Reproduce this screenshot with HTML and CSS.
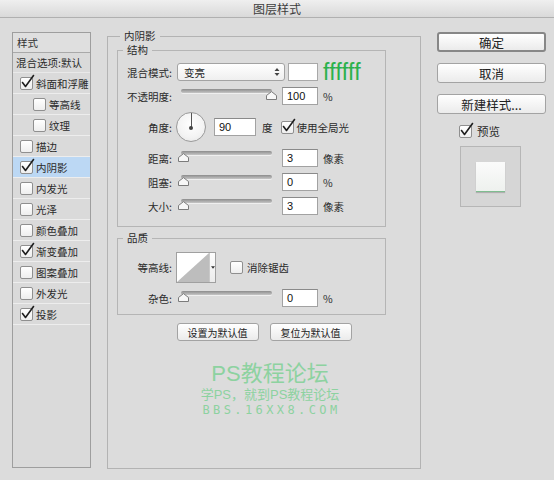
FILE: index.html
```html
<!DOCTYPE html>
<html lang="zh">
<head>
<meta charset="utf-8">
<title>图层样式</title>
<link rel="stylesheet" href="styles.css">
</head>
<body>
<div class="window">
  <div class="titlebar">图层样式</div>
  <div class="content">
    <div class="style-list">
      <div class="list-head">样式</div>
      <div class="list-row blend">混合选项:默认</div>
      <div class="list-row"><span class="cb"><svg viewBox="0 0 16 16"><path d="M2.5 8.5 L5.5 12.5 L13.5 1.5"/></svg></span>斜面和浮雕</div>
      <div class="list-row sub"><span class="cb"></span>等高线</div>
      <div class="list-row sub"><span class="cb"></span>纹理</div>
      <div class="list-row"><span class="cb"></span>描边</div>
      <div class="list-row selected"><span class="cb"><svg viewBox="0 0 16 16"><path d="M2.5 8.5 L5.5 12.5 L13.5 1.5"/></svg></span>内阴影</div>
      <div class="list-row"><span class="cb"></span>内发光</div>
      <div class="list-row"><span class="cb"></span>光泽</div>
      <div class="list-row"><span class="cb"></span>颜色叠加</div>
      <div class="list-row"><span class="cb"><svg viewBox="0 0 16 16"><path d="M2.5 8.5 L5.5 12.5 L13.5 1.5"/></svg></span>渐变叠加</div>
      <div class="list-row"><span class="cb"></span>图案叠加</div>
      <div class="list-row"><span class="cb"></span>外发光</div>
      <div class="list-row"><span class="cb"><svg viewBox="0 0 16 16"><path d="M2.5 8.5 L5.5 12.5 L13.5 1.5"/></svg></span>投影</div>
    </div>

    <fieldset class="main">
      <legend>内阴影</legend>
      <fieldset class="group structure">
        <legend>结构</legend>
        <div class="row">
          <span class="lbl">混合模式:</span>
          <div class="select"><span>变亮</span>
            <svg class="arrows" viewBox="0 0 6 10"><path d="M0.5 4 L3 1 L5.5 4 Z M0.5 6 L3 9 L5.5 6 Z"/></svg>
          </div>
          <span class="swatch"></span>
          <span class="hex">ffffff</span>
        </div>
        <div class="row">
          <span class="lbl">不透明度:</span>
          <div class="slider"><span class="track"></span><svg class="thumb" style="left:88px" viewBox="0 0 11 9"><path d="M0.5 8.5 V4.5 L5.5 0.6 L10.5 4.5 V8.5 Z"/></svg></div>
          <span class="num">100</span>
          <span class="unit">%</span>
        </div>
        <div class="row angle">
          <span class="lbl">角度:</span>
          <div class="dial"><span class="hand"></span><span class="dot"></span></div>
          <span class="num wide">90</span>
          <span class="unit">度</span>
          <span class="cb gl"><svg viewBox="0 0 16 16"><path d="M2.5 8.5 L5.5 12.5 L13.5 1.5"/></svg></span>
          <span class="cb-text">使用全局光</span>
        </div>
        <div class="row">
          <span class="lbl">距离:</span>
          <div class="slider"><span class="track"></span><svg class="thumb" style="left:0px" viewBox="0 0 11 9"><path d="M0.5 8.5 V4.5 L5.5 0.6 L10.5 4.5 V8.5 Z"/></svg></div>
          <span class="num">3</span>
          <span class="unit">像素</span>
        </div>
        <div class="row">
          <span class="lbl">阻塞:</span>
          <div class="slider"><span class="track"></span><svg class="thumb" style="left:0px" viewBox="0 0 11 9"><path d="M0.5 8.5 V4.5 L5.5 0.6 L10.5 4.5 V8.5 Z"/></svg></div>
          <span class="num">0</span>
          <span class="unit">%</span>
        </div>
        <div class="row">
          <span class="lbl">大小:</span>
          <div class="slider"><span class="track"></span><svg class="thumb" style="left:0px" viewBox="0 0 11 9"><path d="M0.5 8.5 V4.5 L5.5 0.6 L10.5 4.5 V8.5 Z"/></svg></div>
          <span class="num">3</span>
          <span class="unit">像素</span>
        </div>
      </fieldset>

      <fieldset class="group quality">
        <legend>品质</legend>
        <div class="row contour-row">
          <span class="lbl">等高线:</span>
          <div class="contour">
            <svg class="graph" viewBox="0 0 32 29" preserveAspectRatio="none"><polygon points="0,29 32,0 32,29"/></svg>
            <span class="drop"><svg viewBox="0 0 5 3"><path d="M0 0 H5 L2.5 3 Z"/></svg></span>
          </div>
          <span class="cb aa"></span>
          <span class="cb-text">消除锯齿</span>
        </div>
        <div class="row noise">
          <span class="lbl">杂色:</span>
          <div class="slider"><span class="track"></span><svg class="thumb" style="left:0px" viewBox="0 0 11 9"><path d="M0.5 8.5 V4.5 L5.5 0.6 L10.5 4.5 V8.5 Z"/></svg></div>
          <span class="num">0</span>
          <span class="unit">%</span>
        </div>
      </fieldset>

      <div class="defaults">
        <span class="btn small">设置为默认值</span>
        <span class="btn small">复位为默认值</span>
      </div>

      <div class="watermark">
        <div class="wm1">PS教程论坛</div>
        <div class="wm2">学PS，就到PS教程论坛</div>
        <div class="wm3">BBS.16XX8.COM</div>
      </div>
    </fieldset>

    <div class="side">
      <span class="btn big primary">确定</span>
      <span class="btn big">取消</span>
      <span class="btn big">新建样式...</span>
      <div class="preview-check">
        <span class="cb"><svg viewBox="0 0 16 16"><path d="M2.5 8.5 L5.5 12.5 L13.5 1.5"/></svg></span>
        <span class="pv-text">预览</span>
      </div>
      <div class="preview"><span class="pv-swatch"></span></div>
    </div>
  </div>
</div>
</body>
</html>
```

FILE: styles.css
```css
* { box-sizing: border-box; }
html, body { margin: 0; padding: 0; }
body {
  width: 554px;
  height: 480px;
  overflow: hidden;
  background: #dcdcdc;
  font-family: "Noto Sans CJK SC", "Liberation Sans", sans-serif;
  font-size: 10.5px;
  color: #2a2a2a;
}
.window {
  width: 554px;
  height: 480px;
  display: flex;
  flex-direction: column;
  background: #dcdcdc;
}
.titlebar {
  height: 18px;
  flex: none;
  background: linear-gradient(#efefef, #d9d9d9);
  border-bottom: 1px solid #b0b0b0;
  text-align: center;
  font-size: 12px;
  line-height: 17px;
  color: #3c3c3c;
}
.content {
  flex: 1;
  display: flex;
  align-items: flex-start;
  padding: 11px 0 0 12px;
}

/* ---------- style list ---------- */
.style-list {
  flex: none;
  width: 79px;
  height: 436px;
  margin-top: 3px;
  border: 1px solid #9e9e9e;
  background: #dadada;
}
.list-head {
  height: 20px;
  line-height: 19px;
  padding-left: 4px;
  background: #dfdfdf;
  border-bottom: 1px solid #a9a9a9;
  color: #333;
}
.list-row {
  height: 21px;
  display: flex;
  align-items: center;
  padding-left: 7px;
  border-bottom: 1px solid #ededed;
  white-space: nowrap;
}
.list-row.blend { height: 20px; padding-left: 3px; border-bottom: 1px solid #e9e9e9; }
.list-row.sub { padding-left: 20px; }
.list-row.selected { background: #bcd8f4; }
.list-row .cb { margin-right: 3px; }

/* ---------- checkbox ---------- */
.cb {
  position: relative;
  flex: none;
  display: inline-block;
  width: 13px;
  height: 13px;
  border: 1px solid #8f8f8f;
  border-radius: 2px;
  background: linear-gradient(#ffffff, #eeeeee);
}
.cb svg {
  position: absolute;
  left: -1px;
  top: -4px;
  width: 16px;
  height: 16px;
  overflow: visible;
}
.cb svg path {
  fill: none;
  stroke: #1e1e1e;
  stroke-width: 1.6;
  stroke-linecap: round;
  stroke-linejoin: round;
}

/* ---------- main fieldset ---------- */
fieldset { margin: 0; min-width: 0; }
legend { padding: 0 4px; line-height: 14px; font-size: 10.5px; color: #2a2a2a; }
.main {
  flex: none;
  width: 314px;
  height: 440px;
  margin-left: 16px;
  padding: 0 0 0 9px;
  border: 1px solid #b3b3b3;
}
.main > legend { margin-left: 3px; }
.group {
  width: 269px;
  padding: 0;
  border: 1px solid #b5b5b5;
}
.group > legend { margin-left: 5px; }
.structure { padding: 3px 0 8px 0; }
.quality { margin-top: 4px; padding: 6px 0 5px 0; }

.row {
  display: flex;
  align-items: center;
  height: 24px;
  white-space: nowrap;
}
.row.angle { height: 38px; }
.row.contour-row { height: 32px; }
.row.noise { height: 22px; margin-top: 4px; }
.lbl {
  flex: none;
  width: 54px;
  margin-right: 4px;
  text-align: right;
}

.select {
  width: 108px;
  height: 18px;
  margin-left: 1px;
  display: flex;
  align-items: center;
  justify-content: space-between;
  padding: 0 4px 0 6px;
  border: 1px solid #a3a3a3;
  border-radius: 3px;
  background: linear-gradient(#ffffff, #efefef);
}
.arrows { width: 6px; height: 10px; }
.arrows path { fill: #444; }
.swatch {
  width: 30px;
  height: 18px;
  margin-left: 3px;
  border: 1px solid #a8a8a8;
  background: #fff;
}
.hex {
  margin-left: 5px;
  font-family: "Liberation Sans", Arial, sans-serif;
  font-size: 23px;
  line-height: 20px;
  color: #2bb14b;
  letter-spacing: 0.3px;
}

.slider {
  position: relative;
  flex: none;
  width: 96px;
  height: 14px;
  margin-left: 2px;
}
.track {
  position: absolute;
  left: 3px;
  top: 0;
  width: 91px;
  height: 4px;
  border-radius: 2px;
  background: linear-gradient(#8c8c8c, #c6c6c6);
  box-shadow: 0 1px 0 #efefef;
}
.thumb {
  position: absolute;
  top: 2px;
  width: 11px;
  height: 9px;
}
.thumb path { fill: #f7f7f7; stroke: #7b7b7b; stroke-width: 1; }

.num {
  flex: none;
  display: flex;
  align-items: center;
  width: 36px;
  height: 18px;
  margin-left: 8px;
  padding-left: 4px;
  border: 1px solid #a2a2a2;
  border-top-color: #8a8a8a;
  background: #fff;
  font-family: "Liberation Sans", Arial, sans-serif;
  font-size: 11px;
  color: #111;
}
.num.wide { width: 42px; }
.unit { margin-left: 5px; }
.angle .unit { margin-left: 6px; }
.angle .num { margin-left: 8px; }
.cb.gl { margin-left: 8px; }
.cb-text { margin-left: 3px; }

.dial {
  position: relative;
  flex: none;
  width: 30px;
  height: 30px;
  border: 1px solid #9a9a9a;
  border-radius: 50%;
  background: radial-gradient(circle at 50% 40%, #ffffff 0%, #f3f3f3 60%, #e2e2e2 100%);
}
.hand {
  position: absolute;
  left: 13.5px;
  top: 0;
  width: 1px;
  height: 14px;
  background: #555;
}
.dot {
  position: absolute;
  left: 12px;
  top: 12.5px;
  width: 4px;
  height: 4px;
  border-radius: 50%;
  background: #444;
}

.contour {
  flex: none;
  display: flex;
  width: 40px;
  height: 31px;
  border: 1px solid #a0a0a0;
  background: #fff;
}
.graph { width: 32px; height: 29px; display: block; }
.graph polygon { fill: #bdbdbd; }
.drop {
  flex: 1;
  display: flex;
  align-items: center;
  justify-content: center;
  border-left: 1px solid #c9c9c9;
  background: linear-gradient(#fdfdfd, #ececec);
}
.drop svg { width: 4px; height: 3px; }
.drop path { fill: #333; }
.cb.aa { margin-left: 14px; }
.contour-row .cb-text { margin-left: 4px; }

.defaults {
  display: flex;
  justify-content: center;
  gap: 11px;
  margin: 8px 0 0 -9px;
}
.btn {
  display: flex;
  align-items: center;
  justify-content: center;
  border: 1px solid #a3a3a3;
  border-radius: 3px;
  background: linear-gradient(#ffffff, #ebebeb);
  color: #222;
  white-space: nowrap;
}
.btn.small {
  width: 82px;
  height: 18px;
  font-size: 10px;
}

.watermark {
  margin: 20px 0 0 3px;
  text-align: center;
  color: #8dd2a0;
  font-family: "Liberation Sans", "Noto Sans CJK SC", sans-serif;
}
.wm1 { font-size: 22px; line-height: 26px; }
.wm2 { font-size: 13px; line-height: 15px; }
.wm3 {
  font-family: "DejaVu Sans Mono", monospace;
  font-size: 12px;
  line-height: 14px;
  letter-spacing: 3.4px;
  margin-top: 1px;
  padding-left: 3px;
}

/* ---------- side ---------- */
.side {
  flex: none;
  width: 109px;
  margin: 3px 0 0 16px;
  display: flex;
  flex-direction: column;
}
.btn.big {
  height: 20px;
  margin-bottom: 11px;
  font-size: 12.5px;
}
.btn.primary { border: 2px solid #878787; }
.preview-check {
  display: flex;
  align-items: center;
  height: 14px;
  margin: -1px 0 0 22px;
}
.pv-text { margin-left: 5px; font-size: 11.5px; }
.preview {
  width: 61px;
  height: 61px;
  margin: 8px 0 0 23px;
  display: flex;
  align-items: center;
  justify-content: center;
  border: 1px solid #b6b6b6;
  background: #d6d6d6;
}
.pv-swatch {
  width: 29px;
  height: 30px;
  background: linear-gradient(#fbfbfb, #eef1ee);
  border-bottom: 1px solid #7fbd90;
  box-shadow: 0 1px 1px rgba(0, 0, 0, 0.18);
}
```
